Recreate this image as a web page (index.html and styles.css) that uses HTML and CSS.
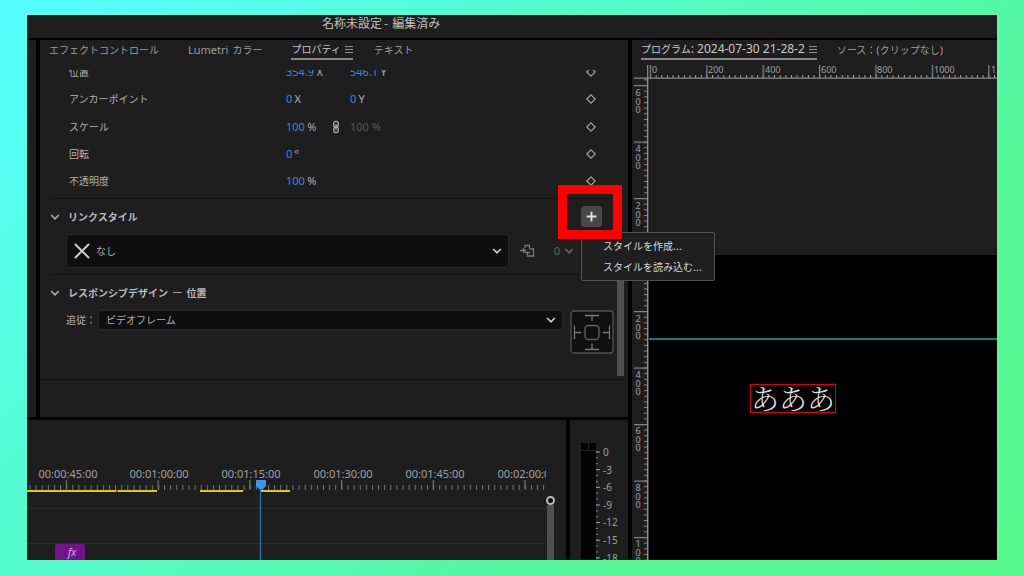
FILE: index.html
```html
<!DOCTYPE html>
<html lang="ja">
<head>
<meta charset="utf-8">
<title>名称未設定 - 編集済み</title>
<link rel="stylesheet" href="styles.css">
</head>
<body>
<svg class="defs" width="0" height="0" aria-hidden="true">
  <symbol id="chevron" viewBox="0 0 10 10"><path d="M1.2 3 L5 6.9 L8.8 3" fill="none" stroke="currentColor" stroke-width="1.7"/></symbol>
  <symbol id="diamond" viewBox="0 0 12 12"><path d="M6 1.8 L10.2 6 L6 10.2 L1.8 6 Z" fill="none" stroke="currentColor" stroke-width="1.2"/></symbol>
  <symbol id="menu" viewBox="0 0 8 8"><path d="M0 1.5h8M0 4.500h8M0 7.500h8" stroke="currentColor" stroke-width="1"/></symbol>
</svg>
<div class="app">
  <header class="titlebar"><h1 class="title">名称未設定<span class="dash">-</span>編集済み</h1></header>
  <div class="workspace">
    <div class="left">
      <div class="upper">
        <div class="sliver"></div>
        <section class="panel properties">
          <nav class="tabs">
            <button class="tab">エフェクトコントロール</button>
            <button class="tab"><span class="latin">Lumetri</span> カラー</button>
            <button class="tab active">プロパティ<svg class="tab-menu"><use href="#menu"/></svg></button>
            <button class="tab">テキスト</button>
          </nav>
          <div class="clip">
            <div class="rows">
              <div class="row"><span>位置</span><span><b class="num">354.9</b> <i class="unit">X</i></span><span><b class="num">546.1</b> <i class="unit">Y</i></span><button class="key" aria-label="キーフレーム"><svg><use href="#diamond"/></svg></button></div>
              <div class="row"><span>アンカーポイント</span><span><b class="num">0</b> <i class="unit">X</i></span><span><b class="num">0</b> <i class="unit">Y</i></span><button class="key" aria-label="キーフレーム"><svg><use href="#diamond"/></svg></button></div>
              <div class="row"><span>スケール</span><span class="linked"><span><b class="num">100</b> <i class="unit">%</i></span><svg class="link" viewBox="0 0 8 14"><path d="M1.8 6 V3.4 Q1.8 1.4 4 1.4 Q6.2 1.4 6.2 3.4 V5 Q6.2 6.7 4.4 6.7 M6.2 8 V10.6 Q6.2 12.6 4 12.6 Q1.8 12.6 1.8 10.6 V9 Q1.8 7.3 3.6 7.3 M1.8 6Q2.200 7.300 4 7M6.200 8Q5.800 6.700 4 7M4 4.2V9.8" fill="none" stroke="currentColor" stroke-width="1.3"/></svg></span><span class="dim">100 %</span><button class="key" aria-label="キーフレーム"><svg><use href="#diamond"/></svg></button></div>
              <div class="row"><span>回転</span><span><b class="num">0</b> <i class="unit">º</i></span><span></span><button class="key" aria-label="キーフレーム"><svg><use href="#diamond"/></svg></button></div>
              <div class="row"><span>不透明度</span><span><b class="num">100</b> <i class="unit">%</i></span><span></span><button class="key" aria-label="キーフレーム"><svg><use href="#diamond"/></svg></button></div>
            </div>
          </div>
          <section class="group style-group">
            <div class="group-head">
              <svg class="chev"><use href="#chevron"/></svg><h2>リンクスタイル</h2>
              <div class="add-wrap">
                <button class="add" aria-label="追加"><svg viewBox="0 0 12 12"><path d="M6 1.5V10.5M1.5 6H10.5" stroke="currentColor" stroke-width="1.7"/></svg></button>
                <div class="popup">
                  <button>スタイルを作成<span class="latin">...</span></button>
                  <button>スタイルを読み込む<span class="latin">...</span></button>
                </div>
                <div class="highlight"></div>
              </div>
            </div>
            <div class="style-line">
              <div class="select-box big">
                <svg class="cross" viewBox="0 0 16 16"><path d="M1.5 1.5L14.5 14.5M14.5 1.5L1.5 14.5" stroke="currentColor" stroke-width="2" stroke-linecap="round"/></svg>
                <select aria-label="リンクスタイル"><option>なし</option></select>
                <svg class="chev bright"><use href="#chevron"/></svg>
              </div>
              <button class="push" aria-label="スタイルを更新"><svg viewBox="0 0 15 14"><path d="M0 6.500h5M3 4.3L5.2 6.500L3 8.7M5 4V1.5H9.5V4.500M5 8.500H9.500V7.500M9.5 5H13.5V12H7.5V9" fill="none" stroke="currentColor" stroke-width="1.3"/></svg></button>
              <button class="count"><span class="latin">0</span><svg class="chev"><use href="#chevron"/></svg></button>
            </div>
          </section>
          <section class="group pin-group">
            <div class="group-head"><svg class="chev"><use href="#chevron"/></svg><h2>レスポンシブデザイン <span class="bar-mark">ー</span> 位置</h2></div>
            <div class="pin-line">
              <label for="pin">追従：</label>
              <div class="select-box">
                <select id="pin"><option>ビデオフレーム</option></select>
                <svg class="chev bright"><use href="#chevron"/></svg>
              </div>
              <svg class="pin" viewBox="0 0 44 44"><rect x="1" y="1" width="42" height="42" rx="3" fill="#101010" stroke="#505050" stroke-width="1.3"/><g fill="none" stroke="#777" stroke-width="1.3"><path d="M15 5.5H29M22 5.5V11M15 39.500H29M22 39V33.500M4.500 15.500V29M4.500 22.500H11M39.500 15.500V29M39.500 22.500H33"/><rect x="15" y="15.500" width="14" height="14" rx="3.500" stroke="#626262"/></g></svg>
            </div>
            <div class="scroll-thumb"></div>
          </section>
        </section>
      </div>
      <div class="lower">
        <section class="panel timeline">
          <div class="sequence">
            <svg class="time-ruler">
              <defs>
                <pattern id="tm" x="0" y="0" width="6.115" height="72" patternUnits="userSpaceOnUse" patternTransform="translate(2.500 0)"><rect y="65" width="1" height="5" fill="#777"/></pattern>
                <pattern id="tM" width="91.720" height="72" patternUnits="userSpaceOnUse" patternTransform="translate(38.800 0)"><rect y="60" width="1.200" height="9" fill="#777"/></pattern>
              </defs>
              <rect width="100%" height="72" fill="url(#tm)"/><rect width="100%" height="72" fill="url(#tM)"/>
              <g text-anchor="middle"><text x="41" y="58">00:00:45:00</text><text x="132" y="58">00:01:00:00</text><text x="224" y="58">00:01:15:00</text><text x="316" y="58">00:01:30:00</text><text x="408" y="58">00:01:45:00</text><text x="500" y="58">00:02:00:00</text></g>
              <path d="M0 71H130M173 71H216M234 71H263" stroke="#d8ce12" stroke-width="2"/><path d="M89 71h2" stroke="#e03a20" stroke-width="2"/>
            </svg>
            <div class="track gap"></div>
            <div class="track"></div>
            <div class="track"><span class="fx">fx</span></div>
            <svg class="playhead" viewBox="0 0 10 80"><path d="M0 0H10V6L6.500 9.500H3.500L0 6Z" fill="#3f94f2"/><path d="M4.500 9V80" stroke="#3272b8" stroke-width="1.300"/></svg>
          </div>
          <div class="vscroll"><span class="knob"></span><span class="bar"></span></div>
        </section>
        <section class="panel meters">
          <svg class="meter">
            <defs><pattern id="mm" width="4" height="5.880" patternUnits="userSpaceOnUse" patternTransform="translate(26 31.500)"><rect width="2" height="1" fill="#888"/></pattern>
            <pattern id="mM" width="4" height="17.640" patternUnits="userSpaceOnUse" patternTransform="translate(26 31.500)"><rect width="4" height="1" fill="#999"/></pattern></defs>
            <rect x="11" y="23" width="15" height="130" fill="#020202"/><path d="M11 30.500H26M18.500 23V30" stroke="#222" stroke-width="1"/>
            <rect x="26" y="31" width="2" height="110" fill="url(#mm)"/><rect x="26" y="31" width="4" height="110" fill="url(#mM)"/>
            <text x="33" y="36">0</text><text x="33" y="54">-3</text><text x="33" y="71">-6</text><text x="33" y="89">-9</text><text x="33" y="106">-12</text><text x="33" y="124">-15</text><text x="33" y="142">-18</text>
          </svg>
        </section>
      </div>
    </div>
    <section class="panel program">
      <nav class="tabs">
        <button class="tab active">プログラム<span class="name">: 2024-07-30 21-28-2</span><svg class="tab-menu"><use href="#menu"/></svg></button>
        <button class="tab">ソース：<span class="latin">(</span>クリップなし<span class="latin">)</span></button>
      </nav>
      <svg class="ruler-top">
        <defs><pattern id="hm" width="5.640" height="15" patternUnits="userSpaceOnUse" patternTransform="translate(18 0)"><rect y="11" width="1" height="3" fill="#a0a0a0"/></pattern>
        <pattern id="hM" width="56.400" height="15" patternUnits="userSpaceOnUse" patternTransform="translate(17.800 0)"><rect y="1" width="1.200" height="13" fill="#858585"/></pattern></defs>
        <rect x="17" width="100%" height="15" fill="url(#hm)"/><rect x="17" width="100%" height="15" fill="url(#hM)"/>
        <rect x="2" y="13.500" width="100%" height="1.300" fill="#858585"/><rect x="15" y="1" width="1.300" height="14" fill="#858585"/>
        <text x="20" y="9">0</text><text x="76" y="9">200</text><text x="133" y="9">400</text><text x="189" y="9">600</text><text x="245" y="9">800</text><text x="302" y="9">1000</text><text x="359" y="9">1200</text>
      </svg>
      <div class="stage">
        <svg class="ruler-left">
          <defs><pattern id="vm" width="17" height="5.650" patternUnits="userSpaceOnUse" patternTransform="translate(0 6)"><rect x="12" width="3" height="1" fill="#888"/></pattern>
          <pattern id="vM" width="17" height="56.500" patternUnits="userSpaceOnUse" patternTransform="translate(0 6)"><rect x="2" width="13" height="1.200" fill="#858585"/></pattern></defs>
          <rect width="17" height="100%" fill="url(#vm)"/><rect width="17" height="100%" fill="url(#vM)"/><rect x="15" width="1.300" height="100%" fill="#909090"/>
          <g text-anchor="middle">
            <text y="17"><tspan x="6">6</tspan><tspan x="6" dy="8.500">0</tspan><tspan x="6" dy="8.500">0</tspan></text>
            <text y="73"><tspan x="6">4</tspan><tspan x="6" dy="8.500">0</tspan><tspan x="6" dy="8.500">0</tspan></text>
            <text y="130"><tspan x="6">2</tspan><tspan x="6" dy="8.500">0</tspan><tspan x="6" dy="8.500">0</tspan></text>
            <text y="243"><tspan x="6">2</tspan><tspan x="6" dy="8.500">0</tspan><tspan x="6" dy="8.500">0</tspan></text>
            <text y="299"><tspan x="6">4</tspan><tspan x="6" dy="8.500">0</tspan><tspan x="6" dy="8.500">0</tspan></text>
            <text y="355"><tspan x="6">6</tspan><tspan x="6" dy="8.500">0</tspan><tspan x="6" dy="8.500">0</tspan></text>
            <text y="412"><tspan x="6">8</tspan><tspan x="6" dy="8.500">0</tspan><tspan x="6" dy="8.500">0</tspan></text>
            <text y="468"><tspan x="6">1</tspan><tspan x="6" dy="8.500">0</tspan><tspan x="6" dy="8.500">0</tspan></text>
          </g>
        </svg>
        <div class="canvas">
          <div class="frame"><div class="guide"></div><div class="caption">あああ</div></div>
        </div>
      </div>
    </section>
  </div>
</div>
</body>
</html>
```
FILE: styles.css
```css
* { box-sizing: border-box; }

body {
  margin: 0;
  height: 100vh;
  padding: 15px 27px 16px;
  background: linear-gradient(135deg, #54ffff 0%, #54fac0 45%, #55f896 75%, #55f88c 100%);
  font: 10px/16px "Noto Sans CJK JP", sans-serif;
  color: #b0b0b0;
}

h1, h2 { margin: 0; font-size: inherit; }

button, select {
  margin: 0;
  padding: 0;
  border: 0;
  background: none;
  font: inherit;
  color: inherit;
}

svg { display: block; flex: none; }
svg text { fill: #a0a0a0; font-family: "Noto Sans", sans-serif; }
.defs { position: absolute; }
.latin, .num, .unit, .dim, .name { font-family: "Noto Sans", sans-serif; font-size: 11px; }

.app {
  height: 100%;
  display: flex;
  flex-direction: column;
  gap: 2px;
  background: #020202;
  overflow: hidden;
}

.titlebar {
  height: 23px;
  padding-left: 295px;
  background: #1e1e1e;
}

.title {
  font-size: 12px;
  line-height: 15px;
  font-weight: 400;
  color: #c0c0c0;
}

.dash { padding: 0 4px 0 2px; }

.workspace {
  flex: 1;
  min-height: 0;
  display: grid;
  grid-template-columns: minmax(0, 601fr) minmax(0, 365fr);
  grid-template-rows: minmax(0, 1fr);
  gap: 4px;
}

.left {
  display: grid;
  grid-template-rows: auto minmax(0, 1fr);
  gap: 3px;
}

.panel, .sliver { background: #1e1e1e; }
.upper { display: flex; gap: 4px; }
.sliver { width: 9px; }

.properties {
  flex: 1;
  min-width: 0;
  padding-bottom: 37px;
}

.tabs {
  display: flex;
  height: 20px;
  gap: 20px;
  padding-left: 9px;
  white-space: nowrap;
}

.properties .tabs { gap: 29px; }

.tab {
  display: flex;
  align-items: center;
  gap: 4px;
  height: 20px;
  color: #9c9c9c;
}

.tab.active {
  color: #c8c8c8;
  border-bottom: 2px solid #888;
}

.properties .tab:last-child { margin-left: -8px; }
.tab .latin { white-space: pre; }
.tab .name { font-size: 12px; }
.program .tab { gap: 0; }
.program .tab-menu { margin-left: 4px; }
.tab-menu { width: 8px; height: 8px; color: #909090; }

.clip {
  height: 129px;
  margin-top: 10px;
  margin-right: 12px;
  margin-left: 10px;
  overflow: hidden;
  border-bottom: 1px solid #141414;
}

.rows {
  display: flex;
  flex-direction: column;
  height: 137px;
  margin-top: -12px;
}

.row {
  flex: 1;
  display: grid;
  grid-template-columns: 217px 64px 1fr 20px;
  align-items: center;
  padding: 0 15px 0 19px;
}

.num { font-weight: 400; color: #3e87dc; }
.unit { font-style: normal; }
.dim { color: #5a5a5a; }
.linked { display: flex; gap: 16px; align-items: center; }
.link { width: 8px; height: 14px; }
.key { display: flex; justify-content: center; color: #a0a0a0; }
.key svg { width: 12px; height: 12px; }

.group-head {
  display: flex;
  align-items: center;
  gap: 8px;
  padding-left: 10px;
  color: #bababa;
}

.bar-mark { padding: 0 2px; font-weight: 400; }

.chev { width: 10px; height: 10px; color: #aaa; }
.bright { color: #ccc; }

.style-group { padding-top: 7px; }
.style-group .group-head { height: 21px; }

.add-wrap {
  position: relative;
  margin-left: auto;
  margin-right: 26px;
}

.add {
  display: grid;
  place-items: center;
  width: 21px;
  height: 21px;
  border-radius: 3px;
  background: #484848;
  color: #e4e4e4;
}

.add svg { width: 13px; height: 13px; }

.popup {
  position: absolute;
  z-index: 2;
  left: 0;
  top: 26px;
  width: 134px;
  padding: 2px 0 3px 21px;
  display: flex;
  flex-direction: column;
  border: 1px solid #505050;
  border-radius: 2px;
  background: #1f1f1f;
  color: #d8d8d8;
}

.popup button { height: 21px; text-align: left; white-space: nowrap; }

.highlight {
  position: absolute;
  z-index: 3;
  left: -23px;
  top: -21px;
  width: 64px;
  height: 54px;
  border: 9px solid #f00;
}

.style-line {
  display: flex;
  align-items: center;
  margin: 7px 12px 0 10px;
  padding: 0 0 6px 16px;
  border-bottom: 1px solid #141414;
}

.select-box {
  position: relative;
  flex: 1;
  height: 20px;
  border: 1px solid #292929;
  border-radius: 3px;
  background: #0f0f0f;
}

.select-box select {
  width: 100%;
  height: 100%;
  padding-left: 7px;
  appearance: none;
  color: #b0b0b0;
}

.select-box .chev { position: absolute; right: 6px; top: 4px; pointer-events: none; }
.select-box.big { height: 34px; }
.big select { padding-left: 29px; }
.big .chev { top: 11px; }
.cross { position: absolute; left: 7px; top: 8px; width: 16px; height: 16px; color: #ccc; }

.push { margin-left: 11px; color: #777; }
.push svg { width: 15px; height: 14px; }

.count {
  display: flex;
  align-items: center;
  gap: 4px;
  margin: 0 42px 0 19px;
  color: #666;
}

.count .chev { color: #666; }

.pin-group {
  position: relative;
  height: 105px;
  padding-top: 8px;
  border-bottom: 1px solid #141414;
}

.pin-group .group-head { height: 19px; }

.pin-line {
  display: flex;
  align-items: flex-start;
  margin-top: 8px;
  padding: 0 14px 0 26px;
}

.pin-line label { width: 32px; line-height: 20px; }
.pin { width: 44px; height: 44px; margin-left: 7px; }

.scroll-thumb {
  position: absolute;
  right: 4px;
  top: 0;
  width: 7px;
  height: 101px;
  background: #505050;
}

.lower {
  display: flex;
  gap: 4px;
  min-height: 0;
  overflow: hidden;
}

.timeline { flex: 1; min-width: 0; display: flex; }

.sequence {
  position: relative;
  flex: 1;
  min-width: 0;
  display: flex;
  flex-direction: column;
  overflow: hidden;
}

.time-ruler { width: 100%; height: 72px; }
.time-ruler text { font-size: 11px; }

.track { height: 35px; flex: none; border-bottom: 1px solid #292929; }
.track.gap { height: 17px; }

.fx {
  display: block;
  width: 30px;
  height: 20px;
  margin-left: 28px;
  padding-left: 4px;
  border-radius: 2px 2px 0 0;
  background: #74128a;
  color: #d8b0df;
  font: italic 10px/16px "Noto Sans", sans-serif;
  text-align: center;
}

.playhead { position: absolute; left: 229px; top: 60px; width: 10px; height: 80px; }

.vscroll {
  width: 20px;
  padding-top: 76px;
  display: flex;
  flex-direction: column;
  align-items: flex-start;
}

.knob {
  width: 9px;
  height: 9px;
  border: 2px solid #bbb;
  border-radius: 50%;
  background: #111;
}

.bar { flex: 1; width: 7px; margin-left: 1px; background: #505050; }

.meters { width: 58px; }
.meter { width: 100%; height: 100%; overflow: hidden; }
.meter text { font-size: 10px; }

.program {
  display: flex;
  flex-direction: column;
  overflow: hidden;
}

.ruler-top { width: 100%; height: 15px; margin-top: 4px; overflow: hidden; }
.ruler-top text, .ruler-left text { font-size: 9px; }

.stage { flex: 1; min-height: 0; display: flex; overflow: hidden; }
.ruler-left { width: 17px; height: 100%; overflow: hidden; }
.canvas { flex: 1; padding-top: 176px; }

.frame {
  height: 100%;
  padding-top: 83px;
  background: #000;
}

.guide { height: 2px; background: #087f7d; }

.caption {
  width: max-content;
  margin: 44px 0 0 101px;
  border: 1px solid #d00;
  font: 300 28px/27px "Noto Serif CJK JP", "Noto Sans CJK JP", serif;
  color: #ddd;
}
```
